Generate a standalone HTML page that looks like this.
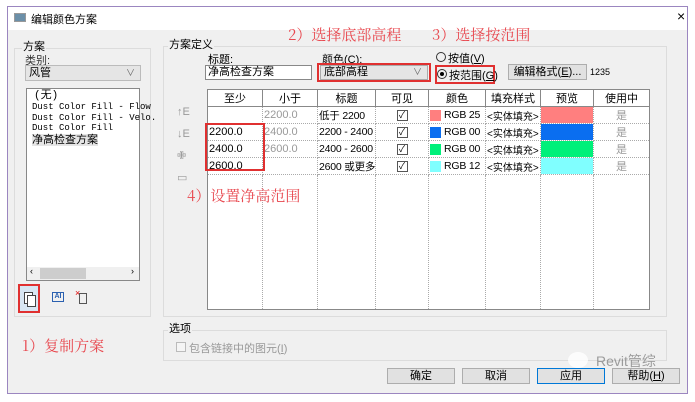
<!DOCTYPE html>
<html><head><meta charset="utf-8"><style>
*{box-sizing:border-box;margin:0;padding:0}
body{width:695px;height:402px;background:#fff;position:relative;overflow:hidden;font-family:"Liberation Sans","Noto Sans CJK SC",sans-serif;font-size:11px;color:#000}
.a{position:absolute}
.dlg{left:7px;top:6px;width:681px;height:388px;border:1px solid #9b86c0;background:#f0f0f0}
.tb{left:8px;top:7px;width:679px;height:23px;background:#fff}
.grp{border:1px solid #dcdcdc}
.lbl{background:#f0f0f0;padding:0 1px;line-height:12px}
.red{color:#e8484f;font-family:"Noto Serif CJK SC","WenQuanYi Zen Hei",serif;font-size:15px;line-height:18px}
.rb{border:2px solid #e03030}
.btn{background:#e1e1e1;border:1px solid #adadad;text-align:center;line-height:14px}
table{border-collapse:collapse;background:#fff;table-layout:fixed}
td,th{border:1px dotted #aaa;height:15.5px;font-weight:normal;padding:0 1px;white-space:nowrap;overflow:hidden;font-size:11px}
td.s{font-size:10.5px;letter-spacing:-0.2px}
th{height:17px;border:1px solid #888;text-align:center}
.g{color:#999}
.sw{display:inline-block;width:11px;height:11px;vertical-align:middle;margin-right:3px}
.cb{display:inline-block;width:11px;height:11px;border:1px solid #555;font-size:9px;line-height:9px;text-align:center}
</style></head><body>
<div class="a dlg"></div>
<div class="a tb"></div>
<div class="a" style="left:14px;top:13px;width:12px;height:9px;background:#6b8fa8;border:1px solid #999"></div>
<div class="a" style="left:31px;top:11px;font-size:11px">编辑颜色方案</div>
<div class="a" style="left:677px;top:8px;font-size:14px">×</div>

<div class="a grp" style="left:14px;top:48px;width:137px;height:269px"></div>
<div class="a lbl" style="left:22px;top:41px">方案</div>
<div class="a" style="left:25px;top:52px;color:#333">类别:</div>
<div class="a" style="left:25px;top:65px;width:116px;height:16px;background:#e5e5e5;border:1px solid #bbb;padding-left:3px;line-height:14px">风管<span style="position:absolute;right:5px;color:#666;font-size:9px">∨</span></div>
<div class="a" style="left:26px;top:88px;width:114px;height:193px;background:#fff;border:1px solid #888"></div>
<div class="a" style="left:32px;top:91px;line-height:10.5px;font-family:'Liberation Mono','Noto Sans CJK SC',monospace;font-size:9px">
<div style="font-size:11px;line-height:11px;padding-left:2px">(无)</div>
<div>Dust Color Fill - Flow</div><div>Dust Color Fill - Velo.</div><div>Dust Color Fill</div>
<div style="font-family:'Liberation Sans','Noto Sans CJK SC',sans-serif;font-size:11px;background:#e5e5e5;display:inline-block;line-height:12px">净高检查方案</div></div>
<div class="a" style="left:27px;top:267px;width:112px;height:13px;background:#f0f0f0"></div>
<div class="a" style="left:40px;top:268px;width:46px;height:11px;background:#cdcdcd"></div>
<div class="a" style="left:30px;top:266px;font-size:9px">‹</div>
<div class="a" style="left:131px;top:266px;font-size:9px">›</div>
<div class="a rb" style="left:18px;top:284px;width:22px;height:29px;background:#d8e6f2"></div>
<div class="a" style="left:24px;top:292px;width:9px;height:12px;border:1px solid #444;background:#fff"></div>
<div class="a" style="left:27px;top:295px;width:9px;height:12px;border:1px solid #444;background:#fff"></div>
<div class="a" style="left:52px;top:292px;width:12px;height:10px;border:1px solid #2a60b0;font-size:7px;color:#2a60b0;line-height:8px;text-align:center;font-weight:bold">AI</div>
<div class="a" style="left:75px;top:288px;color:#d00;font-size:9px">×</div>
<div class="a" style="left:79px;top:293px;width:8px;height:11px;border:1px solid #555"></div>
<div class="a red" style="left:22px;top:337px">1）复制方案</div>

<div class="a grp" style="left:163px;top:46px;width:504px;height:271px"></div>
<div class="a lbl" style="left:168px;top:39px">方案定义</div>
<div class="a red" style="left:288px;top:26px">2）选择底部高程</div>
<div class="a red" style="left:432px;top:26px">3）选择按范围</div>
<div class="a" style="left:208px;top:51px">标题:</div>
<div class="a" style="left:205px;top:65px;width:107px;height:15px;background:#fff;border:1px solid #888;padding-left:2px;line-height:13px">净高检查方案</div>
<div class="a" style="left:322px;top:51px">颜色(<u>C</u>):</div>
<div class="a rb" style="left:317px;top:63px;width:114px;height:19px"></div>
<div class="a" style="left:320px;top:65px;width:108px;height:15px;background:#e5e5e5;border:1px solid #aaa;padding-left:3px;line-height:13px">底部高程<span style="position:absolute;right:5px;color:#666;font-size:9px">∨</span></div>
<div class="a" style="left:436px;top:52px;width:10px;height:10px;border:1px solid #333;border-radius:50%"></div>
<div class="a" style="left:448px;top:50px">按值(<u>V</u>)</div>
<div class="a rb" style="left:435px;top:65px;width:60px;height:19px"></div>
<div class="a" style="left:437px;top:69px;width:10px;height:10px;border:1px solid #333;border-radius:50%"><div style="margin:2px;width:4px;height:4px;background:#000;border-radius:50%"></div></div>
<div class="a" style="left:449px;top:67px">按范围(<u>G</u>)</div>
<div class="a btn" style="left:508px;top:64px;width:79px;height:16px">编辑格式(<u>E</u>)...</div>
<div class="a" style="left:590px;top:67px;font-size:9px">1235</div>

<div class="a" style="left:177px;top:101px;color:#999;font-size:11px;line-height:22px">↑E<br>↓E<br>✙<br>▭</div>

<table class="a" style="left:207px;top:89px;width:443px;border:1px solid #888">
<colgroup><col style="width:55px"><col style="width:55px"><col style="width:58px"><col style="width:53px"><col style="width:57px"><col style="width:55px"><col style="width:53px"><col></colgroup>
<tr><th>至少</th><th>小于</th><th>标题</th><th>可见</th><th>颜色</th><th>填充样式</th><th>预览</th><th>使用中</th></tr>
<tr><td></td><td class="g">2200.0</td><td class="s">低于 2200</td><td style="text-align:center"><span class="cb">✓</span></td><td class="s"><span class="sw" style="background:#ff7f7f"></span>RGB 25</td><td style="font-size:10px">&lt;实体填充&gt;</td><td style="background:#ff7f7f"></td><td class="g" style="text-align:center">是</td></tr>
<tr><td>2200.0</td><td class="g">2400.0</td><td class="s">2200 - 2400</td><td style="text-align:center"><span class="cb">✓</span></td><td class="s"><span class="sw" style="background:#0a6ef0"></span>RGB 00</td><td style="font-size:10px">&lt;实体填充&gt;</td><td style="background:#0a6ef0"></td><td class="g" style="text-align:center">是</td></tr>
<tr><td>2400.0</td><td class="g">2600.0</td><td class="s">2400 - 2600</td><td style="text-align:center"><span class="cb">✓</span></td><td class="s"><span class="sw" style="background:#00f07a"></span>RGB 00</td><td style="font-size:10px">&lt;实体填充&gt;</td><td style="background:#00f07a"></td><td class="g" style="text-align:center">是</td></tr>
<tr><td>2600.0</td><td></td><td class="s">2600 或更多</td><td style="text-align:center"><span class="cb">✓</span></td><td class="s"><span class="sw" style="background:#80ffff"></span>RGB 12</td><td style="font-size:10px">&lt;实体填充&gt;</td><td style="background:#80ffff"></td><td class="g" style="text-align:center">是</td></tr>
<tr><td style="height:135px"></td><td></td><td></td><td></td><td></td><td></td><td></td><td></td></tr>
</table>
<div class="a rb" style="left:205px;top:123px;width:60px;height:48px"></div>
<div class="a red" style="left:187px;top:187px">4）设置净高范围</div>

<div class="a grp" style="left:163px;top:330px;width:504px;height:31px"></div>
<div class="a lbl" style="left:168px;top:323px">选项</div>
<div class="a" style="left:176px;top:342px;width:10px;height:10px;border:1px solid #bbb;background:#f5f5f5"></div>
<div class="a" style="left:189px;top:340px;color:#999">包含链接中的图元(<u>I</u>)</div>

<div class="a btn" style="left:387px;top:368px;width:68px;height:16px">确定</div>
<div class="a btn" style="left:462px;top:368px;width:68px;height:16px">取消</div>
<div class="a btn" style="left:537px;top:368px;width:68px;height:16px;border:1px solid #0078d7">应用</div>
<div class="a btn" style="left:612px;top:368px;width:68px;height:16px">帮助(<u>H</u>)</div>
<div class="a" style="left:568px;top:352px;width:20px;height:16px;border-radius:50%;background:rgba(255,255,255,.8)"></div>
<div class="a" style="left:596px;top:351px;font-size:14px;color:rgba(120,120,120,.7)">Revit管综</div>
</body></html>
